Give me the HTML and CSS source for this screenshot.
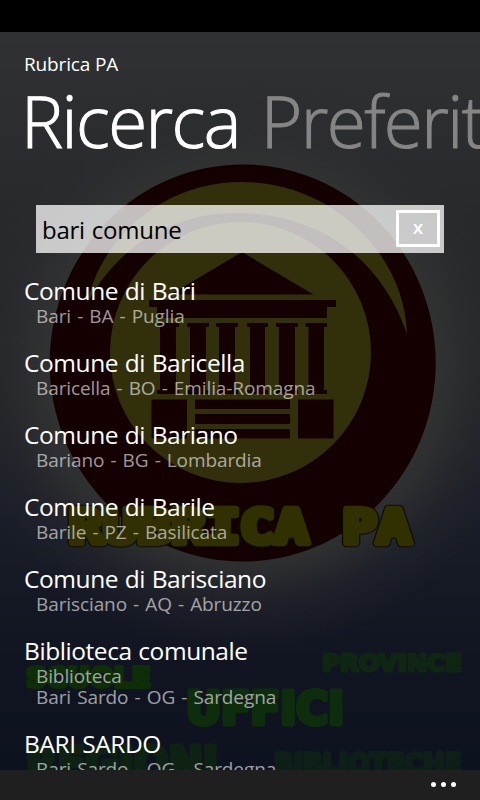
FILE: index.html
```html
<!DOCTYPE html>
<html lang="it">
<head>
<meta charset="utf-8">
<title>Rubrica PA</title>
<link rel="stylesheet" href="styles.css">
</head>
<body>
<div class="phone">
  <div class="status"></div>
  <main class="page">
    <svg class="backdrop" viewBox="0 32 480 738" aria-hidden="true">
      <defs>
        <linearGradient id="sky" x1="0" y1="0" x2="0" y2="1">
          <stop offset="0" stop-color="#303132"/>
          <stop offset=".25" stop-color="#28292d"/>
          <stop offset=".5" stop-color="#222429"/>
          <stop offset=".66" stop-color="#191d27"/>
          <stop offset=".85" stop-color="#111521"/>
          <stop offset="1" stop-color="#0d121f"/>
        </linearGradient>
        <radialGradient id="glow" gradientUnits="userSpaceOnUse" cx="242" cy="363" r="290">
          <stop offset="0" stop-color="#343533"/>
          <stop offset=".64" stop-color="#323332"/>
          <stop offset=".72" stop-color="#303131" stop-opacity=".8"/>
          <stop offset=".84" stop-color="#2c2d2f" stop-opacity=".36"/>
          <stop offset="1" stop-color="#292a2d" stop-opacity="0"/>
        </radialGradient>
      </defs>
      <rect y="32" width="480" height="738" fill="url(#sky)"/>
      <rect y="32" width="480" height="738" fill="url(#glow)"/>
      <ellipse class="dark" cx="242.7" cy="363" rx="193" ry="198.6"/>
      <path class="olive" d="M87 303C103 234 165 182 242 182C334 182 405 256 407 334C377 247 306 213 238 213C170 213 118 247 87 303Z"/>
      <circle class="olive" cx="240.5" cy="352.5" r="130.5"/>
      <g class="dark">
        <path d="M242 252L313.500 294.500H170.500Z"/>
        <path d="M149 300H336V307H327V318H157V307H149Z"/>
        <path d="M157 323h22v4h-3v63h3v4h-22v-4h3v-63h-3zM187 323h22v4h-3v63h3v4h-22v-4h3v-63h-3zM216 323h22v4h-3v63h3v4h-22v-4h3v-63h-3zM247 323h21v4h-3v63h3v4h-21v-4h3v-63h-3zM276 323h22v4h-3v63h3v4h-22v-4h3v-63h-3zM305.500 323h21.500v4h-3v63h3v4h-21.500v-4h3v-63h-3z"/>
        <path d="M151.500 399.500h35.500v39h-35.500zM298 399.500h35.500v39H298zM195 399.500h95v9.500h-95zM195 414h95v10h-95zM195 429h95v9.500h-95z"/>
      </g>
      <g class="brand">
        <text class="brand-edge" x="69" y="543" textLength="342" lengthAdjust="spacingAndGlyphs">RUBRICA PA</text>
        <text class="brand-face" x="69" y="543" textLength="342" lengthAdjust="spacingAndGlyphs">RUBRICA PA</text>
      </g>
      <g class="word">
        <text class="w1" x="26" y="687" textLength="125" lengthAdjust="spacingAndGlyphs">SCUOLE</text>
        <text class="w2" x="322" y="671" textLength="140" lengthAdjust="spacingAndGlyphs">PROVINCE</text>
        <text class="w3" x="186" y="724" textLength="158" lengthAdjust="spacingAndGlyphs">UFFICI</text>
        <text class="w4" x="26" y="779" textLength="192" lengthAdjust="spacingAndGlyphs">REGIONI</text>
        <text class="w5" x="274" y="773" textLength="188" lengthAdjust="spacingAndGlyphs">BIBLIOTECHE</text>
      </g>
    </svg>
    <div class="content">
      <div class="app-title">Rubrica PA</div>
      <nav class="pivots"><span class="pivot">Ricerca</span><span class="pivot next">Preferiti</span></nav>
      <div class="search"><span class="query">bari comune</span><button class="clear"><span>X</span></button></div>
      <ul class="results">
        <li><div class="name">Comune di Bari</div><div class="place">Bari - BA - Puglia</div></li>
        <li><div class="name">Comune di Baricella</div><div class="place">Baricella - BO - Emilia-Romagna</div></li>
        <li><div class="name">Comune di Bariano</div><div class="place">Bariano - BG - Lombardia</div></li>
        <li><div class="name">Comune di Barile</div><div class="place">Barile - PZ - Basilicata</div></li>
        <li><div class="name">Comune di Barisciano</div><div class="place">Barisciano - AQ - Abruzzo</div></li>
        <li><div class="name">Biblioteca comunale</div><div class="place">Biblioteca</div><div class="place">Bari Sardo - OG - Sardegna</div></li>
        <li><div class="name">BARI SARDO</div><div class="place">Bari Sardo - OG - Sardegna</div></li>
      </ul>
    </div>
  </main>
  <footer class="appbar"><i></i><i></i><i></i></footer>
</div>
</body>
</html>
```
FILE: styles.css
```css
* { box-sizing: border-box; }
body { margin: 0; background: #000; font-family: "Open Sans", "Noto Sans", sans-serif; color: #fff; }
.phone { width: 480px; height: 800px; display: flex; flex-direction: column; overflow: hidden; }
.status { height: 32px; flex: none; background: #000; }
.page { position: relative; height: 738px; flex: none; overflow: hidden; }
.backdrop { position: absolute; inset: 0; width: 480px; height: 738px; }
.dark { fill: #140000; }
.olive { fill: #32300b; }
.brand { font: 700 47px "DejaVu Sans Mono", monospace; stroke-linejoin: round; }
.brand-edge { fill: #0c0c02; stroke: #0c0c02; stroke-width: 8.5px; }
.brand-face { fill: #303000; stroke: #303000; stroke-width: 6.5px; -webkit-box-reflect: below; }
.word { font-family: "DejaVu Sans", sans-serif; font-weight: 700; stroke-linejoin: round; stroke-width: 4px; }
.w1 { font-size: 27px; fill: #0d2e07; stroke: #0d2e07; }
.w2 { font-size: 23px; stroke-width: 3px; fill: #0f2612; stroke: #0f2612; }
.w3 { font-size: 44px; stroke-width: 5px; fill: #0e2d0c; stroke: #0e2d0c; }
.w4 { font-size: 44px; stroke-width: 5px; fill: #0d2213; stroke: #0d2213; }
.w5 { font-size: 27px; fill: #0d1f17; stroke: #0d1f17; }
.content { position: relative; padding: 20px 0 0 24px; }
.app-title { font-size: 19px; line-height: 24px; letter-spacing: -0.15px; white-space: nowrap; }
.pivots { display: flex; gap: 24px; height: 92px; white-space: nowrap; }
.pivot { font-size: 71px; line-height: 90px; font-weight: 300; letter-spacing: -1.6px; margin-left: -3px; -webkit-text-stroke: 1px currentColor; }
.next { color: #858586; }
.search { display: flex; align-items: center; justify-content: space-between; width: 408px; height: 48px; margin: 37px 0 0 12px; padding: 0 4px 2px 6px; background: rgba(255, 255, 255, .75); color: #000; }
.query { font-size: 24px; line-height: 32px; letter-spacing: -0.25px; word-spacing: 1px; padding-top: 3px; }
.clear { width: 44px; height: 37px; padding: 0; border: 3px solid #fff; background: none; color: #fff; font: 700 15px/20px "Open Sans", sans-serif; }
.results { list-style: none; margin: 23px 0 0; padding: 0; }
.results li { margin-bottom: 21px; white-space: nowrap; }
.name { font-size: 24.5px; line-height: 30px; letter-spacing: -0.43px; word-spacing: .7px; }
.place { padding-left: 12px; font-size: 19px; line-height: 21px; letter-spacing: -0.1px; word-spacing: 1.3px; color: rgba(255, 255, 255, .6); }
.appbar { display: flex; align-items: center; justify-content: flex-end; gap: 5px; height: 30px; flex: none; padding: 0 24px 1px 0; background: #1f1f1f; }
.appbar i { width: 5px; height: 5px; border-radius: 50%; background: #fff; }
```
